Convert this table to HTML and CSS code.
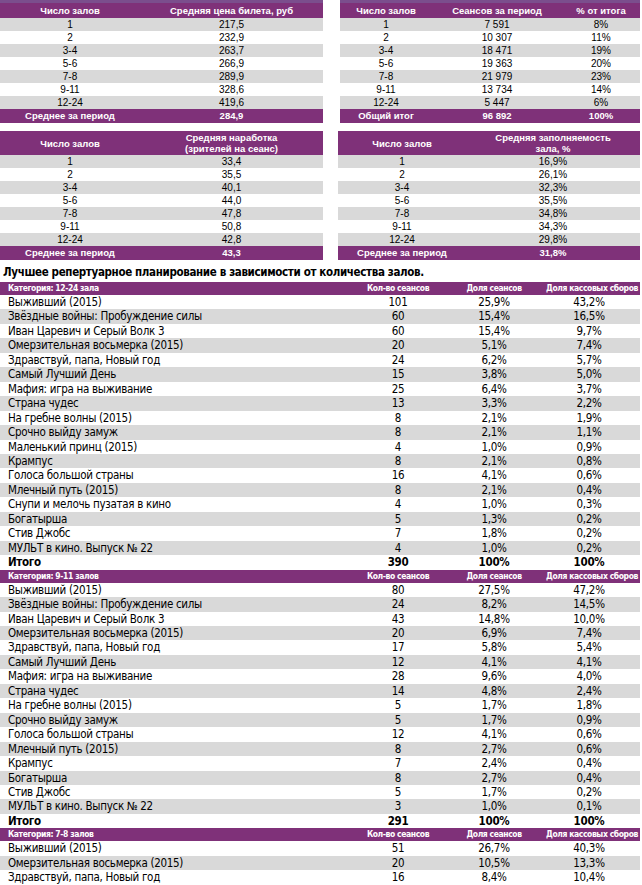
FILE: index.html
```html
<!DOCTYPE html>
<html lang="ru">
<head>
<meta charset="utf-8">
<title>Статистика</title>
<link rel="stylesheet" href="styles.css">
</head>
<body>
<div class="page">
  <div class="summary">
    <table class="stat t1 cut">
      <colgroup><col class="c140"><col></colgroup>
      <thead><tr class="h1"><th>Число залов</th><th>Средняя цена билета, руб</th></tr></thead>
      <tbody>
        <tr><td>1</td><td>217,5</td></tr>
        <tr><td>2</td><td>232,9</td></tr>
        <tr><td>3-4</td><td>263,7</td></tr>
        <tr><td>5-6</td><td>266,9</td></tr>
        <tr><td>7-8</td><td>289,9</td></tr>
        <tr><td>9-11</td><td>328,6</td></tr>
        <tr><td>12-24</td><td>419,6</td></tr>
      </tbody>
      <tfoot><tr><td>Среднее за период</td><td>284,9</td></tr></tfoot>
    </table>
    <table class="stat t2 cut">
      <colgroup><col class="c92"><col class="c130"><col></colgroup>
      <thead><tr class="h1"><th>Число залов</th><th>Сеансов за период</th><th>% от итога</th></tr></thead>
      <tbody>
        <tr><td>1</td><td>7 591</td><td>8%</td></tr>
        <tr><td>2</td><td>10 307</td><td>11%</td></tr>
        <tr><td>3-4</td><td>18 471</td><td>19%</td></tr>
        <tr><td>5-6</td><td>19 363</td><td>20%</td></tr>
        <tr><td>7-8</td><td>21 979</td><td>23%</td></tr>
        <tr><td>9-11</td><td>13 734</td><td>14%</td></tr>
        <tr><td>12-24</td><td>5 447</td><td>6%</td></tr>
      </tbody>
      <tfoot><tr><td>Общий итог</td><td>96 892</td><td>100%</td></tr></tfoot>
    </table>
    <table class="stat t3">
      <colgroup><col class="c140"><col></colgroup>
      <thead><tr class="h2"><th>Число залов</th><th>Средняя наработка<br>(зрителей на сеанс)</th></tr></thead>
      <tbody>
        <tr><td>1</td><td>33,4</td></tr>
        <tr><td>2</td><td>35,5</td></tr>
        <tr><td>3-4</td><td>40,1</td></tr>
        <tr><td>5-6</td><td>44,0</td></tr>
        <tr><td>7-8</td><td>47,8</td></tr>
        <tr><td>9-11</td><td>50,8</td></tr>
        <tr><td>12-24</td><td>42,8</td></tr>
      </tbody>
      <tfoot><tr><td>Среднее за период</td><td>43,3</td></tr></tfoot>
    </table>
    <table class="stat t4">
      <colgroup><col class="c128"><col></colgroup>
      <thead><tr class="h2"><th>Число залов</th><th>Средняя заполняемость<br>зала, %</th></tr></thead>
      <tbody>
        <tr><td>1</td><td>16,9%</td></tr>
        <tr><td>2</td><td>26,1%</td></tr>
        <tr><td>3-4</td><td>32,3%</td></tr>
        <tr><td>5-6</td><td>35,5%</td></tr>
        <tr><td>7-8</td><td>34,8%</td></tr>
        <tr><td>9-11</td><td>34,3%</td></tr>
        <tr><td>12-24</td><td>29,8%</td></tr>
      </tbody>
      <tfoot><tr><td>Среднее за период</td><td>31,8%</td></tr></tfoot>
    </table>
  </div>

  <h2 class="title">Лучшее репертуарное планирование в зависимости от количества залов.</h2>

  <table class="rep">
    <colgroup><col class="n"><col class="k"><col class="d"><col class="s"></colgroup>
    <tbody>
      <tr class="cat"><th>Категория: 12-24 зала</th><th>Кол-во сеансов</th><th>Доля сеансов</th><th>Доля кассовых сборов</th></tr>
      <tr><td>Выживший (2015)</td><td>101</td><td>25,9%</td><td>43,2%</td></tr>
      <tr><td>Звёздные войны: Пробуждение силы</td><td>60</td><td>15,4%</td><td>16,5%</td></tr>
      <tr><td>Иван Царевич и Серый Волк 3</td><td>60</td><td>15,4%</td><td>9,7%</td></tr>
      <tr><td>Омерзительная восьмерка (2015)</td><td>20</td><td>5,1%</td><td>7,4%</td></tr>
      <tr><td>Здравствуй, папа, Новый год</td><td>24</td><td>6,2%</td><td>5,7%</td></tr>
      <tr><td>Самый Лучший День</td><td>15</td><td>3,8%</td><td>5,0%</td></tr>
      <tr><td>Мафия: игра на выживание</td><td>25</td><td>6,4%</td><td>3,7%</td></tr>
      <tr><td>Страна чудес</td><td>13</td><td>3,3%</td><td>2,2%</td></tr>
      <tr><td>На гребне волны (2015)</td><td>8</td><td>2,1%</td><td>1,9%</td></tr>
      <tr><td>Срочно выйду замуж</td><td>8</td><td>2,1%</td><td>1,1%</td></tr>
      <tr><td>Маленький принц (2015)</td><td>4</td><td>1,0%</td><td>0,9%</td></tr>
      <tr><td>Крампус</td><td>8</td><td>2,1%</td><td>0,8%</td></tr>
      <tr><td>Голоса большой страны</td><td>16</td><td>4,1%</td><td>0,6%</td></tr>
      <tr><td>Млечный путь (2015)</td><td>8</td><td>2,1%</td><td>0,4%</td></tr>
      <tr><td>Снупи и мелочь пузатая в кино</td><td>4</td><td>1,0%</td><td>0,3%</td></tr>
      <tr><td>Богатырша</td><td>5</td><td>1,3%</td><td>0,2%</td></tr>
      <tr><td>Стив Джобс</td><td>7</td><td>1,8%</td><td>0,2%</td></tr>
      <tr><td>МУЛЬТ в кино. Выпуск № 22</td><td>4</td><td>1,0%</td><td>0,2%</td></tr>
      <tr class="total"><td>Итого</td><td>390</td><td>100%</td><td>100%</td></tr>
    </tbody>
    <tbody>
      <tr class="cat"><th>Категория: 9-11 залов</th><th>Кол-во сеансов</th><th>Доля сеансов</th><th>Доля кассовых сборов</th></tr>
      <tr><td>Выживший (2015)</td><td>80</td><td>27,5%</td><td>47,2%</td></tr>
      <tr><td>Звёздные войны: Пробуждение силы</td><td>24</td><td>8,2%</td><td>14,5%</td></tr>
      <tr><td>Иван Царевич и Серый Волк 3</td><td>43</td><td>14,8%</td><td>10,0%</td></tr>
      <tr><td>Омерзительная восьмерка (2015)</td><td>20</td><td>6,9%</td><td>7,4%</td></tr>
      <tr><td>Здравствуй, папа, Новый год</td><td>17</td><td>5,8%</td><td>5,4%</td></tr>
      <tr><td>Самый Лучший День</td><td>12</td><td>4,1%</td><td>4,1%</td></tr>
      <tr><td>Мафия: игра на выживание</td><td>28</td><td>9,6%</td><td>4,0%</td></tr>
      <tr><td>Страна чудес</td><td>14</td><td>4,8%</td><td>2,4%</td></tr>
      <tr><td>На гребне волны (2015)</td><td>5</td><td>1,7%</td><td>1,8%</td></tr>
      <tr><td>Срочно выйду замуж</td><td>5</td><td>1,7%</td><td>0,9%</td></tr>
      <tr><td>Голоса большой страны</td><td>12</td><td>4,1%</td><td>0,6%</td></tr>
      <tr><td>Млечный путь (2015)</td><td>8</td><td>2,7%</td><td>0,6%</td></tr>
      <tr><td>Крампус</td><td>7</td><td>2,4%</td><td>0,4%</td></tr>
      <tr><td>Богатырша</td><td>8</td><td>2,7%</td><td>0,4%</td></tr>
      <tr><td>Стив Джобс</td><td>5</td><td>1,7%</td><td>0,2%</td></tr>
      <tr><td>МУЛЬТ в кино. Выпуск № 22</td><td>3</td><td>1,0%</td><td>0,1%</td></tr>
      <tr class="total"><td>Итого</td><td>291</td><td>100%</td><td>100%</td></tr>
    </tbody>
    <tbody>
      <tr class="cat"><th>Категория: 7-8 залов</th><th>Кол-во сеансов</th><th>Доля сеансов</th><th>Доля кассовых сборов</th></tr>
      <tr><td>Выживший (2015)</td><td>51</td><td>26,7%</td><td>40,3%</td></tr>
      <tr><td>Омерзительная восьмерка (2015)</td><td>20</td><td>10,5%</td><td>13,3%</td></tr>
      <tr><td>Здравствуй, папа, Новый год</td><td>16</td><td>8,4%</td><td>10,4%</td></tr>
    </tbody>
  </table>
</div>
</body>
</html>
```

FILE: styles.css
```css
html, body {
  margin: 0;
  padding: 0;
  background: #ffffff;
  overflow: hidden;
}

.page {
  width: 642px;
  height: 885px;
  overflow: hidden;
  color: #000000;
  font-family: "Liberation Sans", Arial, sans-serif;
}

/* ---------- summary tables ---------- */
.summary {
  display: grid;
  grid-template-columns: 323px 302px;
  column-gap: 15px;
  row-gap: 8px;
  align-items: start;
}

.stat {
  width: 100%;
  border-collapse: collapse;
  table-layout: fixed;
}

.stat .c140 { width: 140px; }
.stat .c92 { width: 92px; }
.stat .c130 { width: 130px; }
.stat .c128 { width: 128px; }

.t2 { margin-left: 2px; width: 300px; }

.stat.cut {
  border-top: 3px solid #7b4e8d;
}

.stat th,
.stat td {
  padding: 0;
  text-align: center;
  white-space: nowrap;
  overflow: hidden;
}

.stat th,
.stat tfoot td {
  background: #7f3179;
  color: #ffffff;
  font-weight: bold;
  font-size: 9.5px;
}

.stat .h1 th {
  height: 15px;
  line-height: 15px;
}

.stat .h2 th {
  height: 24px;
  line-height: 11px;
}

.stat tbody td {
  height: 13px;
  line-height: 13px;
  font-size: 10px;
}

.stat tbody tr:nth-child(odd) td {
  background: #d9d9d9;
}

.stat tfoot td {
  height: 14px;
  line-height: 14px;
}

/* ---------- heading ---------- */
.title {
  margin: 0;
  height: 22px;
  box-sizing: border-box;
  padding: 5px 0 0 3px;
  font-family: "DejaVu Sans Condensed", "Liberation Sans", sans-serif;
  font-size: 11.5px;
  letter-spacing: -0.35px;
  line-height: 15px;
  font-weight: bold;
  white-space: nowrap;
}

/* ---------- repertoire table ---------- */
.rep {
  width: 640px;
  border-collapse: collapse;
  table-layout: fixed;
  font-family: "DejaVu Sans Condensed", "Liberation Sans", sans-serif;
}

.rep .n { width: 352px; }
.rep .k { width: 92px; }
.rep .d { width: 100px; }
.rep .s { width: 96px; }

.rep th,
.rep td {
  padding: 0;
  white-space: nowrap;
  text-align: center;
}

.rep th:first-child,
.rep td:first-child {
  text-align: left;
  padding-left: 8px;
}

.rep td:last-child {
  padding-right: 6px;
}

.rep .cat th {
  background: #7f3179;
  color: #ffffff;
  font-size: 8.5px;
  letter-spacing: -0.4px;
  font-weight: bold;
  height: 13px;
  line-height: 13px;
}

.rep td {
  height: 14.45px;
  line-height: 14.45px;
  font-size: 11.5px;
  letter-spacing: -0.3px;
}

.rep tr:nth-child(odd) td {
  background: #d9d9d9;
}

.rep tr:nth-child(even) td {
  background: #ffffff;
}

.rep tr.total td {
  background: #ffffff;
  font-weight: bold;
}
```
